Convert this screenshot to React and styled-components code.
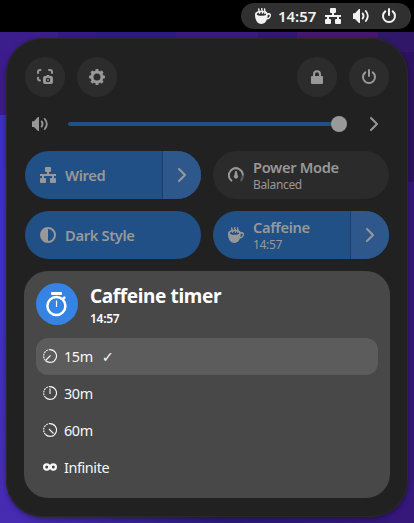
import React from 'react';
import styled, { createGlobalStyle, css } from 'styled-components';

const GlobalStyle = createGlobalStyle`
  * { box-sizing: border-box; }
  body { margin: 0; overflow: hidden; font-family: "Noto Sans", sans-serif; }
`;

const Desktop = styled.div`
  width: 414px;
  height: 523px;
  overflow: hidden;
  background:
    linear-gradient(90deg, #3c1d8c 0 58px, #34198a 58px 96px, #2e1a86 96px 176px, #3a1a84 176px 258px, #321678 258px 297px, #431772 297px 378px, #311768 378px) 0 32px / 414px 20px no-repeat,
    linear-gradient(90deg, #3c1c8a 0 50%, transparent 50%) 0 32px / 414px 83px no-repeat,
    linear-gradient(90deg, transparent 50%, #2c135f 50%) 0 32px / 414px 150px no-repeat,
    linear-gradient(90deg, transparent 5%, #2c1a7c 55%, #36177a 100%),
    linear-gradient(180deg, #3c30c4 20%, #3f30c4 60%, #472bb0 100%);
`;

const TopBar = styled.header`
  height: 32px;
  background: #000;
  display: flex;
  justify-content: flex-end;
  align-items: center;
  padding-right: 3px;
`;

const StatusPill = styled.div`
  width: 170px;
  height: 26px;
  border-radius: 13px;
  background: #303030;
  color: #f2f2f2;
  display: flex;
  align-items: center;
  padding-left: 14px;
`;

const Clock = styled.span`
  width: 54px;
  padding-left: 7px;
  font-size: 15px;
  line-height: 20px;
  font-weight: 600;
  letter-spacing: -0.05px;
`;

const StatusIcon = styled.span`
  display: flex;
  width: ${(p) => p.$width || 28}px;
`;

const Panel = styled.main`
  width: 402px;
  height: 479px;
  margin: 6px 0 0 6px;
  padding: 19px 18px;
  border-radius: 37px;
  background: #212121;
  box-shadow: inset 0 0 0 1px #292929, 0 2px 5px rgba(0, 0, 0, 0.35);
  color: #989898;
`;

const ActionRow = styled.div`
  display: flex;
  gap: 12px;
  height: 40px;
  padding: 0 1px;
`;

const RoundButton = styled.button`
  width: 40px;
  height: 40px;
  padding: 0;
  border: 0;
  border-radius: 50%;
  background: #2c2c2c;
  color: inherit;
  display: grid;
  place-items: center;
  margin-left: ${(p) => (p.$push ? 'auto' : '0')};
`;

const VolumeRow = styled.div`
  height: 54px;
  padding: 0 8px;
  display: flex;
  align-items: center;
`;

const Track = styled.div`
  flex: none;
  width: 275px;
  height: 4px;
  margin: 0 23px 0 20px;
  border-radius: 2px;
  background: #215089;
  display: flex;
  align-items: center;
  justify-content: flex-end;
`;

const Knob = styled.span`
  width: 16px;
  height: 16px;
  margin-right: -4px;
  border-radius: 50%;
  background: #999;
`;

const TileGrid = styled.div`
  display: grid;
  grid-template-columns: 176px 176px;
  gap: 12px;
  padding: 0 1px;
`;

const Tile = styled.div`
  height: 48px;
  border-radius: 24px;
  overflow: hidden;
  display: flex;
  background: ${(p) => (p.$active ? '#215087' : '#2b2b2b')};
`;

const TileBody = styled.div`
  flex: 1;
  display: flex;
  align-items: center;
  gap: 9px;
  padding-left: 15px;
`;

const TileTitle = styled.div`
  font-size: 14.7px;
  line-height: 18px;
  font-weight: 600;
  white-space: nowrap;
  letter-spacing: -0.35px;
`;

const TileSubtitle = styled.div`
  font-size: 12px;
  line-height: 17px;
  letter-spacing: -0.35px;
`;

const TileArrow = styled.div`
  width: 39px;
  border-left: 1px solid #1b3d68;
  background: #2e588c;
  display: grid;
  place-items: center;
`;

const MenuCard = styled.section`
  height: 227px;
  margin-top: 12px;
  padding: 12px;
  border-radius: 24px;
  background: #484848;
  color: #fff;
`;

const MenuHeader = styled.div`
  height: 55px;
  display: flex;
  gap: 12px;
`;

const Badge = styled.div`
  width: 42px;
  height: 42px;
  border-radius: 50%;
  background: #3584e4;
  display: grid;
  place-items: center;
`;

const MenuTitle = styled.h1`
  margin: 0;
  font-size: 19px;
  line-height: 27px;
  font-weight: 700;
  letter-spacing: -0.37px;
`;

const MenuTime = styled.div`
  font-size: 12px;
  line-height: 17px;
  font-weight: 600;
  letter-spacing: -0.3px;
`;

const MenuItem = styled.div`
  height: 37px;
  padding-left: 7px;
  border-radius: 12px;
  display: flex;
  align-items: center;
  font-size: 14.4px;
  letter-spacing: -0.4px;
  color: #f7f7f7;
  ${(p) => p.$selected && css`background: #5c5c5c;`}
`;

const MenuIcon = styled.span`
  margin-bottom: 1px;
`;

const MenuLabel = styled.span`
  margin-left: 7px;
`;

const CheckMark = styled.span`
  margin-left: 9px;
  font-family: "DejaVu Sans", sans-serif;
  font-size: 14.5px;
  line-height: 18px;
`;

const Svg = styled.svg`
  display: block;
  flex: none;
  fill: currentColor;
`;

const Line = styled.path`
  fill: none;
  stroke: currentColor;
  stroke-width: ${(p) => p.$w || 2};
  stroke-linecap: ${(p) => p.$cap || 'butt'};
`;

const Icon = ({ children, size = 16 }) => (
  <Svg width={size} height={size} viewBox="0 0 16 16">{children}</Svg>
);

const CupIcon = () => (
  <Icon>
    <path fillRule="evenodd" d="M0 6.5C0 4 3 2.8 6.5 2.8S12.5 4 12.7 5.2C14.8 4.4 16 5.4 16 7.2c0 2.4-1.8 4-4.1 4.4C11 14.4 9.3 16 6.5 16 2.3 16 0 11.8 0 6.5ZM1.7 6.2C2.3 7.3 4 7.8 6.4 7.8s4.3-.6 4.8-1.6C10.5 4.9 8.7 4.3 6.4 4.3S2.2 5 1.7 6.2ZM12.7 7.1l-.3 2.9c1.5-.5 2.3-1.5 2.3-2.6 0-.8-1-.9-2-.3Z" />
    <Line $w={1.3} d="M4.2.5q-1 1.2 0 2.4t0 2.8M7.2 0q-1 1.3 0 2.6t0 3.1M10 .5q-1 1.2 0 2.4t-.6 2.8" />
  </Icon>
);

const NetworkIcon = () => (
  <Icon>
    <path d="M6 0h4q1 0 1 1v3q0 1-1 1H9v2h7v2h-2v2h1q1 0 1 1v3q0 1-1 1h-4q-1 0-1-1v-3q0-1 1-1h1V9H4v2h1q1 0 1 1v3q0 1-1 1H1q-1 0-1-1v-3q0-1 1-1h1V9H0V7h7V5H6Q5 5 5 4V1Q5 0 6 0Z" />
  </Icon>
);

const VolumeIcon = () => (
  <Icon>
    <path d="M0 5.2h2L6 1h1v14H6l-4-4H0Z" />
    <Line $w={1.8} $cap="round" d="M9.6 5.4q2 2.6 0 5.2" />
    <Line $w={1.8} $cap="round" d="M12.8 3q4 5 0 10" />
  </Icon>
);

const PowerIcon = () => (
  <Icon>
    <Line $cap="round" d="M4.3 3.4a6 6 0 1 0 7.4 0" />
    <Line $cap="round" d="M8 1v6" />
  </Icon>
);

const ScreenshotIcon = () => (
  <Icon>
    <Line $cap="round" d="M1 4V3q0-2 2-2h.5M12 1h1q2 0 2 2v1M1 8.7v.8q0 2 2 2" />
    <path fillRule="evenodd" d="M6 9q0-2 2-2h1l1-1h2l1 1h1q2 0 2 2v4q0 2-2 2H8q-2 0-2-2ZM11 8.7a2.3 2.3 0 1 0 0 4.6 2.3 2.3 0 0 0 0-4.6Z" />
    <circle cx="11" cy="11" r=".9" />
  </Icon>
);

const GearIcon = () => (
  <Icon>
    <circle cx="8" cy="8" r="5" fill="none" stroke="currentColor" strokeWidth="3" />
    {[0, 45, 90, 135, 180, 225, 270, 315].map((a) => (
      <rect key={a} x="6.4" y="0" width="3.2" height="3" rx=".8" transform={`rotate(${a} 8 8)`} />
    ))}
  </Icon>
);

const LockIcon = () => (
  <Icon>
    <Line d="M5 8V5.2a3 3 0 0 1 6 0V8" />
    <rect x="2" y="7" width="12" height="8" rx="1" />
  </Icon>
);

const ChevronIcon = () => (
  <Icon>
    <Line $cap="round" strokeLinejoin="round" d="M5 2l6 6-6 6" />
  </Icon>
);

const ContrastIcon = () => (
  <Icon>
    <circle cx="8" cy="8" r="7" fill="none" stroke="currentColor" strokeWidth="2" />
    <path d="M8 1a7 7 0 0 0 0 14Z" />
  </Icon>
);

const GaugeIcon = () => (
  <Icon>
    <Line $cap="round" d="M3.4 13.6A7 7 0 1 1 14.8 7.5" />
    <Line $w={2.4} opacity=".42" d="M14.8 8q.2 3.5-2.2 6" />
    <path d="M7.2 4h1.6L9.6 8a2.2 2.2 0 1 1-3.2 0Z" />
  </Icon>
);

const StopwatchIcon = () => (
  <Svg width="24" height="26" viewBox="0 0 24 26">
    <circle cx="11.4" cy="14.9" r="9" fill="none" stroke="currentColor" strokeWidth="2.5" />
    <rect x="6" y="1" width="11" height="3" rx="1" />
    <Line $w={2.6} $cap="round" d="M18 8l1.3-1.3" />
    <Line $w={1.2} d="M11.5 9.5v6.5" />
  </Svg>
);

const DialIcon = ({ hand }) => (
  <Svg width="14" height="14" viewBox="0 0 14 14">
    <Line $w={1.1} d="M7 .6a6.4 6.4 0 1 1-4.5 10.9" />
    <Line $w={1.1} strokeDasharray="1.8 .9" d="M2.5 11.5A6.4 6.4 0 0 1 7 .6" />
    <Line $w={1.1} d={hand} />
  </Svg>
);

const InfinityIcon = () => (
  <Svg width="14" height="14" viewBox="0 0 14 14">
    <circle cx="3.7" cy="7" r="2.6" fill="none" stroke="currentColor" strokeWidth="2.2" />
    <circle cx="10.3" cy="7" r="2.6" fill="none" stroke="currentColor" strokeWidth="2.2" />
  </Svg>
);

const QuickTile = ({ icon, title, subtitle, active, arrow }) => (
  <Tile $active={active}>
    <TileBody>
      {icon}
      <div>
        <TileTitle>{title}</TileTitle>
        {subtitle && <TileSubtitle>{subtitle}</TileSubtitle>}
      </div>
    </TileBody>
    {arrow && <TileArrow><ChevronIcon /></TileArrow>}
  </Tile>
);

const TimerOption = ({ icon, label, selected }) => (
  <MenuItem $selected={selected}>
    <MenuIcon>{icon}</MenuIcon>
    <MenuLabel>{label}</MenuLabel>
    {selected && <CheckMark>✓</CheckMark>}
  </MenuItem>
);

export default function App() {
  return (
    <>
      <GlobalStyle />
      <Desktop>
        <TopBar>
          <StatusPill>
            <StatusIcon $width={16}><CupIcon /></StatusIcon>
            <Clock>14:57</Clock>
            <StatusIcon><NetworkIcon /></StatusIcon>
            <StatusIcon><VolumeIcon /></StatusIcon>
            <StatusIcon $width={16}><PowerIcon /></StatusIcon>
          </StatusPill>
        </TopBar>
        <Panel>
          <ActionRow>
            <RoundButton aria-label="Screenshot"><ScreenshotIcon /></RoundButton>
            <RoundButton aria-label="Settings"><GearIcon /></RoundButton>
            <RoundButton aria-label="Lock" $push><LockIcon /></RoundButton>
            <RoundButton aria-label="Power"><PowerIcon /></RoundButton>
          </ActionRow>
          <VolumeRow>
            <VolumeIcon />
            <Track><Knob /></Track>
            <ChevronIcon />
          </VolumeRow>
          <TileGrid>
            <QuickTile active arrow icon={<NetworkIcon />} title="Wired" />
            <QuickTile icon={<GaugeIcon />} title="Power Mode" subtitle="Balanced" />
            <QuickTile active icon={<ContrastIcon />} title="Dark Style" />
            <QuickTile active arrow icon={<CupIcon />} title="Caffeine" subtitle="14:57" />
          </TileGrid>
          <MenuCard>
            <MenuHeader>
              <Badge><StopwatchIcon /></Badge>
              <div>
                <MenuTitle>Caffeine timer</MenuTitle>
                <MenuTime>14:57</MenuTime>
              </div>
            </MenuHeader>
            <TimerOption selected icon={<DialIcon hand="M7.5 6.5L3 11" />} label="15m" />
            <TimerOption icon={<DialIcon hand="M7 2.5V8" />} label="30m" />
            <TimerOption icon={<DialIcon hand="M6 6l4.5 4.5" />} label="60m" />
            <TimerOption icon={<InfinityIcon />} label="Infinite" />
          </MenuCard>
        </Panel>
      </Desktop>
    </>
  );
}
